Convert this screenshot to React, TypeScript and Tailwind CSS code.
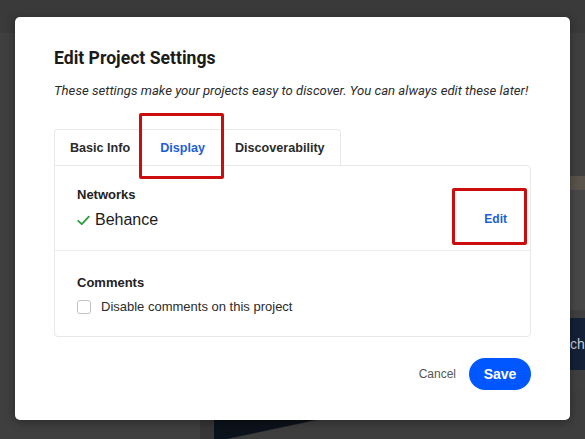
import React, { useState } from 'react';

const tabs = ['Basic Info', 'Display', 'Discoverability'];

const CheckMark: React.FC = () => (
  <svg width="13" height="11" viewBox="0 0 13 11" fill="none" className="shrink-0">
    <path d="M1.2 5.8 L4.8 9.2 L11.8 1.6" stroke="#2a9d3c" strokeWidth="1.8" strokeLinecap="round" strokeLinejoin="round" />
  </svg>
);

const App: React.FC = () => {
  const [active, setActive] = useState('Display');
  const [disableComments, setDisableComments] = useState(false);

  return (
    <div className="relative w-[585px] h-[439px] overflow-hidden bg-[#3f3f3f] font-['Liberation_Sans',Arial,sans-serif]">
      {/* page behind the dialog */}
      <div className="h-[33px] bg-[#3a3a3a]" />
      <div className="absolute left-[200px] top-[390px] w-[14px] h-[49px] bg-[#363636]" />
      <div className="absolute left-[214px] top-[390px] w-[371px] h-[49px] bg-[linear-gradient(168deg,#0c121b_40%,#3e3e3e_41%)]" />
      <div className="absolute left-[560px] top-[176px] w-[25px] h-[14px] bg-[#5a534c]" />
      <div className="absolute left-[560px] top-[190px] w-[25px] h-[120px] bg-[#474747]" />
      <div className="absolute left-[560px] top-[318px] w-[25px] h-[52px] overflow-hidden bg-[#142036] text-[14px] text-[#c7ccd6] leading-[52px] pl-[10px] whitespace-nowrap">ch</div>

      {/* dialog */}
      <div className="absolute left-[15px] top-[17px] w-[555px] h-[403px] bg-white rounded-[5px] shadow-[0_2px_10px_rgba(0,0,0,0.35)] pt-[29px] px-[39px]">
        <h2 className="font-['Roboto',sans-serif] font-bold text-[17.6px] leading-[24px] text-[#1b1b1b]">
          Edit Project Settings
        </h2>
        <p className="mt-[12px] font-['Roboto',sans-serif] italic text-[13.15px] leading-[18px] text-[#2c2c2c] whitespace-nowrap">
          These settings make your projects easy to discover. You can always edit these later!
        </p>

        {/* tabs */}
        <div className="mt-[29px] flex">
          <div className="flex h-[36px] border border-b-0 border-[#e8e8e8] rounded-t-[4px]">
            {tabs.map((t) => (
              <button
                key={t}
                onClick={() => setActive(t)}
                className={`px-[15px] text-[12.6px] font-bold leading-[37px] ${active === t ? 'text-[#1d5fd4]' : 'text-[#2b2b2b]'}`}
              >
                {t}
              </button>
            ))}
          </div>
        </div>

        {/* content */}
        <div className="w-[477px] border border-[#e8e8e8] rounded-b-[4px] rounded-tr-[4px]">
          <div className="flex items-center justify-between h-[85px] px-[22px] border-b border-[#ececec]">
            <div className="flex flex-col gap-[6px]">
              <div className="text-[13px] leading-[18px] font-bold text-[#222]">Networks</div>
              <div className="flex items-center gap-[5px] text-[16px] leading-[20px] text-[#1b1b1b]">
                <CheckMark />
                Behance
              </div>
            </div>
            <button className="text-[12px] font-bold text-[#1d5fd4] mr-[1px] mt-[22px]">Edit</button>
          </div>
          <div className="h-[85px] px-[22px] pt-[23px]">
            <div className="text-[13px] leading-[18px] font-bold text-[#222]">Comments</div>
            <label className="mt-[5px] flex items-center gap-[10px] text-[13px] leading-[20px] text-[#2b2b2b] cursor-pointer">
              <input
                type="checkbox"
                checked={disableComments}
                onChange={(e) => setDisableComments(e.target.checked)}
                className="appearance-none w-[14px] h-[14px] rounded-[3px] border border-[#c4c4c4] bg-white"
              />
              Disable comments on this project
            </label>
          </div>
        </div>

        {/* footer */}
        <div className="mt-[21px] flex items-center justify-end gap-[13px]">
          <button className="text-[12px] text-[#555]">Cancel</button>
          <button className="w-[62px] h-[32px] rounded-full bg-[#0057ff] text-white text-[14px] font-bold">Save</button>
        </div>
      </div>

      {/* annotation boxes */}
      <div className="absolute left-[139px] top-[113px] w-[85px] h-[66px] border-[3px] border-[#cc0d0d] rounded-[2px]" />
      <div className="absolute left-[452px] top-[188px] w-[75px] h-[57px] border-[3px] border-[#cc0d0d] rounded-[2px]" />
    </div>
  );
};

export default App;
